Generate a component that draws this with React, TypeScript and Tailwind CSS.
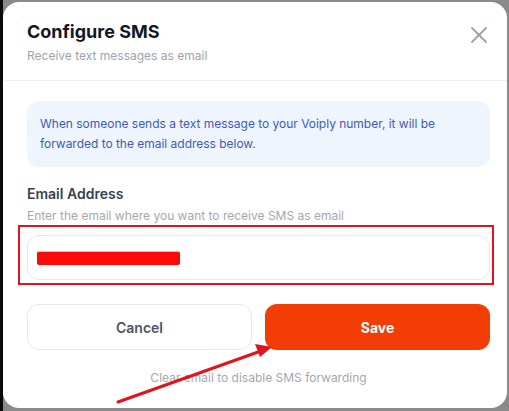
import React from 'react';
import { X } from 'lucide-react';

export default function App() {
  return (
    <div
      className="relative w-[509px] h-[411px] overflow-hidden bg-[#8a8a8a] border-l-[3px] border-[#0b0b0b] pt-[2px]"
      style={{ fontFamily: 'Inter, "Noto Sans", sans-serif' }}
    >
      {/* Modal */}
      <div className="w-[504px] h-[406px] bg-white rounded-2xl flex flex-col">
        {/* Header */}
        <div className="flex items-start justify-between pl-[24px] pr-[14px] pt-[16px] pb-[15px] border-b border-[#f0f0f2]">
          <div>
            <h2 className="text-[18px] leading-[28px] font-bold text-[#111827]">Configure SMS</h2>
            <p className="mt-[1px] text-[12px] leading-[18px] text-[#9ca3af]">Receive text messages as email</p>
          </div>
          <button className="mt-[3px] text-[#9ca3af]">
            <X size={28} strokeWidth={1.6} />
          </button>
        </div>

        {/* Body */}
        <div className="pl-[24px] pr-[17px] pt-[20px] flex flex-col">
          <div className="rounded-xl bg-[#eff5fe] px-[13px] py-[13px] text-[12px] leading-[20px] tracking-[-0.02px] text-[#3f5bb6]">
            When someone sends a text message to your Voiply number, it will be forwarded to the email address below.
          </div>

          <label className="mt-[17px] text-[14px] leading-[20px] font-semibold text-[#374151]">Email Address</label>
          <p className="mt-[3px] text-[12px] leading-[18px] text-[#a3a8b0]">
            Enter the email where you want to receive SMS as email
          </p>

          <div className="mt-[10px] h-[45px] rounded-xl border border-[#e5e7eb] flex items-center pl-[9px]">
            <div className="w-[143px] h-[14px] bg-[#ff0a0a] rounded-[2px] border-t border-[#ffb0b0]" />
          </div>

          <div className="mt-[24px] grid grid-cols-2 gap-[13px]">
            <button className="h-[46px] rounded-xl border border-[#e5e7eb] bg-white text-[14px] font-semibold text-[#4b5563]">
              Cancel
            </button>
            <button className="h-[46px] rounded-xl bg-[#f23d05] text-[14px] font-bold text-white">
              Save
            </button>
          </div>

          <p className="mt-[19px] text-center text-[12px] leading-[18px] text-[#a3a8b0]">
            Clear email to disable SMS forwarding
          </p>
        </div>
      </div>

      {/* Annotation: red box around input */}
      <div className="absolute left-[15px] top-[225px] w-[476px] h-[60px] border-2 border-[#e3121c] pointer-events-none" />

      {/* Annotation: red arrow */}
      <svg className="absolute left-0 top-0 pointer-events-none" width="509" height="411">
        <line x1="115" y1="402" x2="258" y2="351" stroke="#e0141c" strokeWidth="3" strokeLinecap="round" />
        <polygon points="269,347 252,344 257,357" fill="#e0141c" />
      </svg>
    </div>
  );
}
